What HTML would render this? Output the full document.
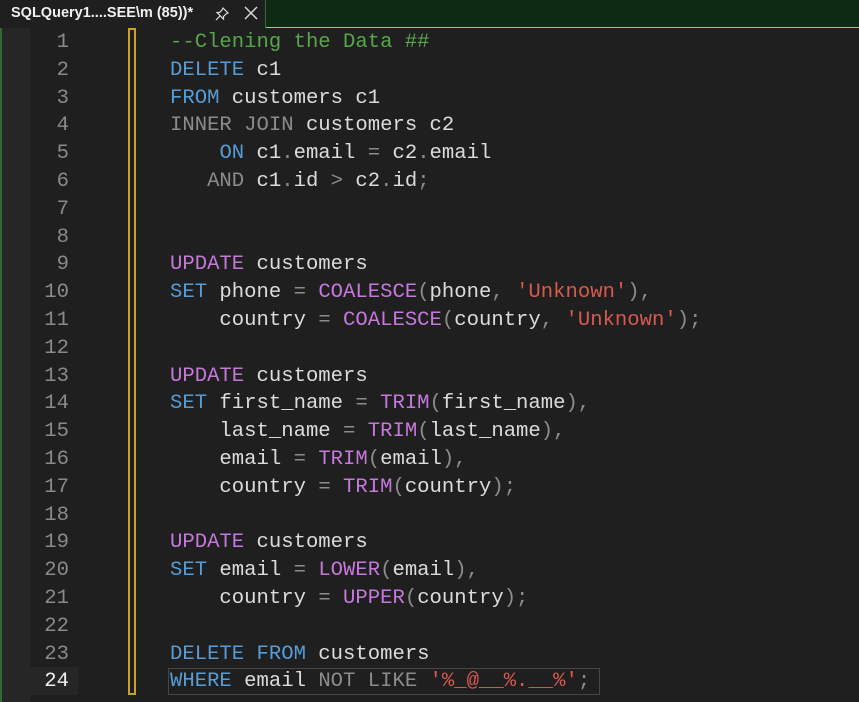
<html><head><style>
body{margin:0;width:859px;height:702px;background:#1f1f1f;overflow:hidden;position:relative;font-family:"Liberation Mono",monospace}
.bar{position:absolute;left:0;top:0;width:859px;height:27px;background:#0f2a14;border-bottom:1px solid #7fd58a}
.tab{position:absolute;left:0;top:0;width:266px;height:28px;background:#1f1f1f;border-right:1px solid #2f6b38;font-family:"Liberation Sans",sans-serif;font-weight:bold;font-size:14.5px;color:#f0f0f0;line-height:26px;padding-left:11px;box-sizing:border-box}
.gut{position:absolute;left:0;top:28px;width:30px;height:674px;background:#262626;border-left:2px solid #2f6b38;box-sizing:border-box}
.ybar{position:absolute;left:128px;top:28px;width:8px;height:667px;border:2px solid #c8a22a;box-sizing:border-box}
.ln{position:absolute;left:30px;width:39px;text-align:right;color:#8a8a8a;font-size:20.6px;line-height:27.8px}
.cd{position:absolute;left:170px;color:#dcdcdc;font-size:20.6px;line-height:27.8px;white-space:pre}
.k{color:#569cd6}.g{color:#8c8c8c}.f{color:#c678dd}.s{color:#d65a50}.c{color:#57a64a}.p{color:#8c8c8c}
.cur{position:absolute;left:168px;top:668px;width:432px;height:27px;border:1px solid #464646;box-sizing:border-box}
</style></head><body>
<div class="bar"></div>
<div class="tab">SQLQuery1....SEE\m (85))*
<svg style="position:absolute;left:214px;top:6px" width="16" height="16" viewBox="0 0 16 16" fill="none" stroke="#ddd" stroke-width="1.2"><path d="M9 2 L14 7 L12 8 L9.5 10.5 L9.5 13 L3 6.5 L5.5 6.5 L8 4 Z"/><path d="M6 10 L2 14"/></svg>
<svg style="position:absolute;left:243px;top:5px" width="16" height="16" viewBox="0 0 16 16" stroke="#ddd" stroke-width="1.4"><path d="M2 2 L14 14 M14 2 L2 14"/></svg>
</div>
<div class="gut"></div>
<div style="position:absolute;left:30px;top:667px;width:48px;height:28px;background:#262626"></div>
<div class="ybar"></div>
<div class="cur"></div>
<div id="L"></div>
<script>
var lines=[
'<span class="c">--Clening the Data ##</span>',
'<span class="k">DELETE</span> c1',
'<span class="k">FROM</span> customers c1',
'<span class="g">INNER JOIN</span> customers c2',
'    <span class="k">ON</span> c1<span class="p">.</span>email <span class="p">=</span> c2<span class="p">.</span>email',
'   <span class="g">AND</span> c1<span class="p">.</span>id <span class="p">&gt;</span> c2<span class="p">.</span>id<span class="p">;</span>',
'','',
'<span class="f">UPDATE</span> customers',
'<span class="k">SET</span> phone <span class="p">=</span> <span class="f">COALESCE</span><span class="p">(</span>phone<span class="p">,</span> <span class="s">\'Unknown\'</span><span class="p">),</span>',
'    country <span class="p">=</span> <span class="f">COALESCE</span><span class="p">(</span>country<span class="p">,</span> <span class="s">\'Unknown\'</span><span class="p">);</span>',
'',
'<span class="f">UPDATE</span> customers',
'<span class="k">SET</span> first_name <span class="p">=</span> <span class="f">TRIM</span><span class="p">(</span>first_name<span class="p">),</span>',
'    last_name <span class="p">=</span> <span class="f">TRIM</span><span class="p">(</span>last_name<span class="p">),</span>',
'    email <span class="p">=</span> <span class="f">TRIM</span><span class="p">(</span>email<span class="p">),</span>',
'    country <span class="p">=</span> <span class="f">TRIM</span><span class="p">(</span>country<span class="p">);</span>',
'',
'<span class="f">UPDATE</span> customers',
'<span class="k">SET</span> email <span class="p">=</span> <span class="f">LOWER</span><span class="p">(</span>email<span class="p">),</span>',
'    country <span class="p">=</span> <span class="f">UPPER</span><span class="p">(</span>country<span class="p">);</span>',
'',
'<span class="k">DELETE FROM</span> customers',
'<span class="k">WHERE</span> email <span class="g">NOT LIKE</span> <span class="s">\'%_@__%.__%\'</span><span class="p">;</span>'];
var h='';for(var i=0;i<24;i++){var t=29+i*27.8;h+='<div class="ln" style="top:'+t+'px'+(i==23?';color:#f0f0f0':'')+'">'+(i+1)+'</div><div class="cd" style="top:'+t+'px">'+lines[i]+'</div>';}
document.getElementById('L').innerHTML=h;
</script>
</body></html>
